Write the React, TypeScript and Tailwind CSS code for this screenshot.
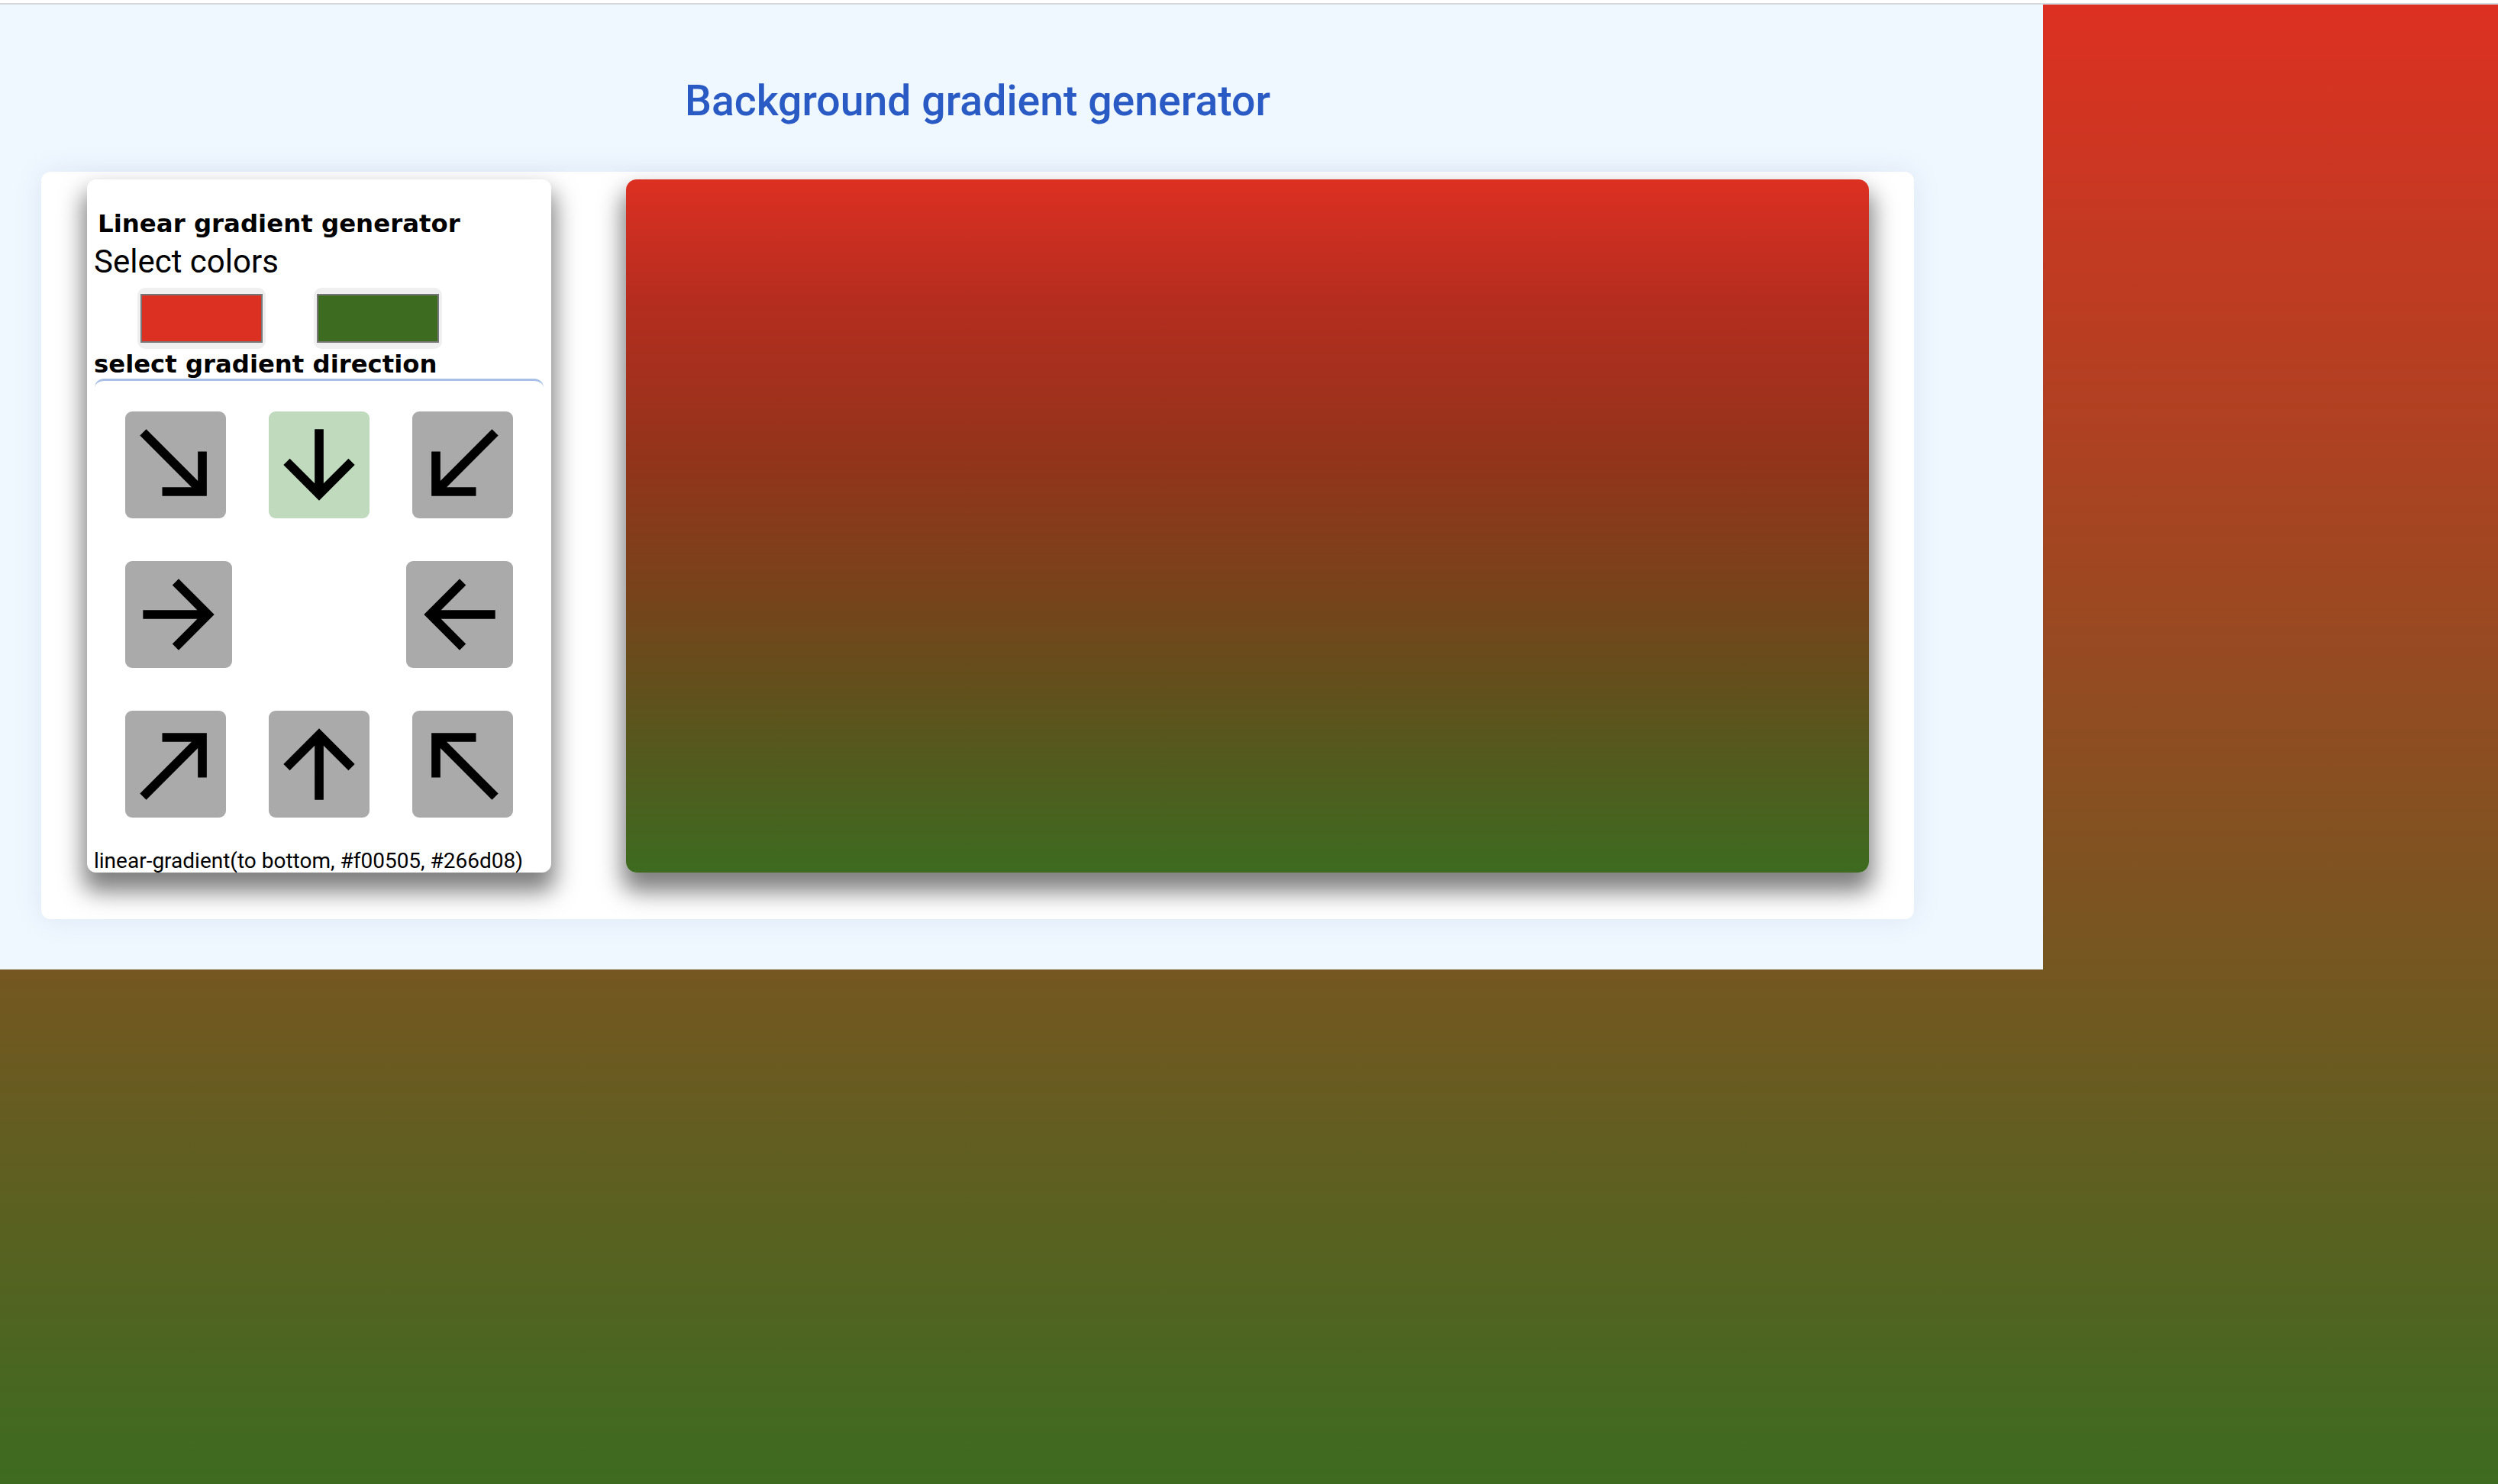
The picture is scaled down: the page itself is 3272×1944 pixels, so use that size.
import React from 'react';

const icons: Record<string, string> = {
  southEast: 'M19 9h-2v6.59L5.41 4 4 5.41 15.59 17H9v2h10V9z',
  south: 'M20 12l-1.41-1.41L13 16.17V4h-2v12.17l-5.58-5.59L4 12l8 8 8-8z',
  southWest: 'M15 19v-2H8.41L20 5.41 18.59 4 7 15.59V9H5v10h10z',
  east: 'M12 4l-1.41 1.41L16.17 11H4v2h12.17l-5.58 5.59L12 20l8-8z',
  west: 'M20 11H7.83l5.59-5.59L12 4l-8 8 8 8 1.41-1.41L7.83 13H20v-2z',
  northEast: 'M9 5v2h6.59L4 18.59 5.41 20 17 8.41V15h2V5H9z',
  north: 'M4 12l1.41 1.41L11 7.83V20h2V7.83l5.58 5.59L20 12l-8-8-8 8z',
  northWest: 'M5 15h2V8.41L18.59 20 20 18.59 8.41 7H15V5H5v10z',
};

function DirButton({ icon, active, wide }: { icon: string; active?: boolean; wide?: boolean }) {
  const bg = active ? 'bg-[#c0dabd]' : 'bg-[#aaaaaa]';
  const w = wide ? 'w-[140px]' : 'w-[132px]';
  return (
    <button className={`${w} h-[140px] ${bg} rounded-[9px] flex items-center justify-center overflow-visible`}>
      <svg viewBox="0 0 24 24" width={140} height={140} className="shrink-0" fill="#000">
        <path d={icons[icon]} />
      </svg>
    </button>
  );
}

function Swatch({ color }: { color: string }) {
  return (
    <div className="w-[168px] h-[80px] rounded-[10px] bg-[#efefef] px-[4px] py-[8px]">
      <div className={`w-full h-full border-2 border-[#777777] ${color}`} />
    </div>
  );
}

export default function App() {
  return (
    <div className="min-h-[1944px] w-full bg-[linear-gradient(to_bottom,#dd3022,#3d6b20)]">
      <div className="h-[4px] bg-white" />
      <div className="h-[2px] bg-[#d6dade]" />

      <div className="w-[2676px] h-[1264px] bg-[#eff7ff]">
        <div className="w-[2561px] pt-[93px]">
          <h1 className="text-center text-[55.4px] leading-[67px] font-medium text-[#2a5ac4] font-['Roboto',sans-serif]">
            Background gradient generator
          </h1>

          <div className="mx-[54px] mt-[59px] bg-white rounded-[12px] shadow-[0_0_40px_rgba(30,60,120,0.08)] flex items-start gap-[98px] pt-[10px] px-[60px] pb-[61px]">
            {/* controls */}
            <div className="w-[608px] h-[908px] shrink-0 bg-white rounded-[12px] shadow-[0_20px_30px_5px_rgba(0,0,0,0.5)] px-[9px] pt-[40px] text-black">
              <h3 className="ml-[5px] font-['DejaVu_Sans',sans-serif] font-bold text-[32.4px] leading-[37px]">
                Linear gradient generator
              </h3>
              <p className="mt-[7px] font-['Roboto',sans-serif] text-[42px] leading-[48px]">Select colors</p>
              <div className="mt-[10px] ml-[57px] flex gap-[63px]">
                <Swatch color="bg-[#dc3023]" />
                <Swatch color="bg-[#3d6b20]" />
              </div>
              <p className="mt-[2px] font-['DejaVu_Sans',sans-serif] font-bold text-[32.3px] leading-[37px]">
                select gradient direction
              </p>

              <div className="mx-[1px] border-t-[3px] border-[#a9c0e6] rounded-[12px] px-[40px] py-[40px] flex flex-col gap-[56px]">
                <div className="flex justify-between">
                  <DirButton icon="southEast" />
                  <DirButton icon="south" active />
                  <DirButton icon="southWest" />
                </div>
                <div className="flex justify-between">
                  <DirButton icon="east" wide />
                  <DirButton icon="west" wide />
                </div>
                <div className="flex justify-between">
                  <DirButton icon="northEast" />
                  <DirButton icon="north" />
                  <DirButton icon="northWest" />
                </div>
              </div>

              <p className="font-['Roboto',sans-serif] text-[28px] leading-[33px] whitespace-nowrap">
                linear-gradient(to bottom, #f00505, #266d08)
              </p>
            </div>

            {/* preview */}
            <div className="w-[1628px] h-[908px] shrink-0 rounded-[14px] bg-[linear-gradient(to_bottom,#dc3022_0%,#b42d1f_18%,#93341a_40%,#77431a_60%,#58561c_80%,#3d6b20_100%)] shadow-[0_20px_30px_5px_rgba(0,0,0,0.5)]" />
          </div>
        </div>
      </div>
    </div>
  );
}
